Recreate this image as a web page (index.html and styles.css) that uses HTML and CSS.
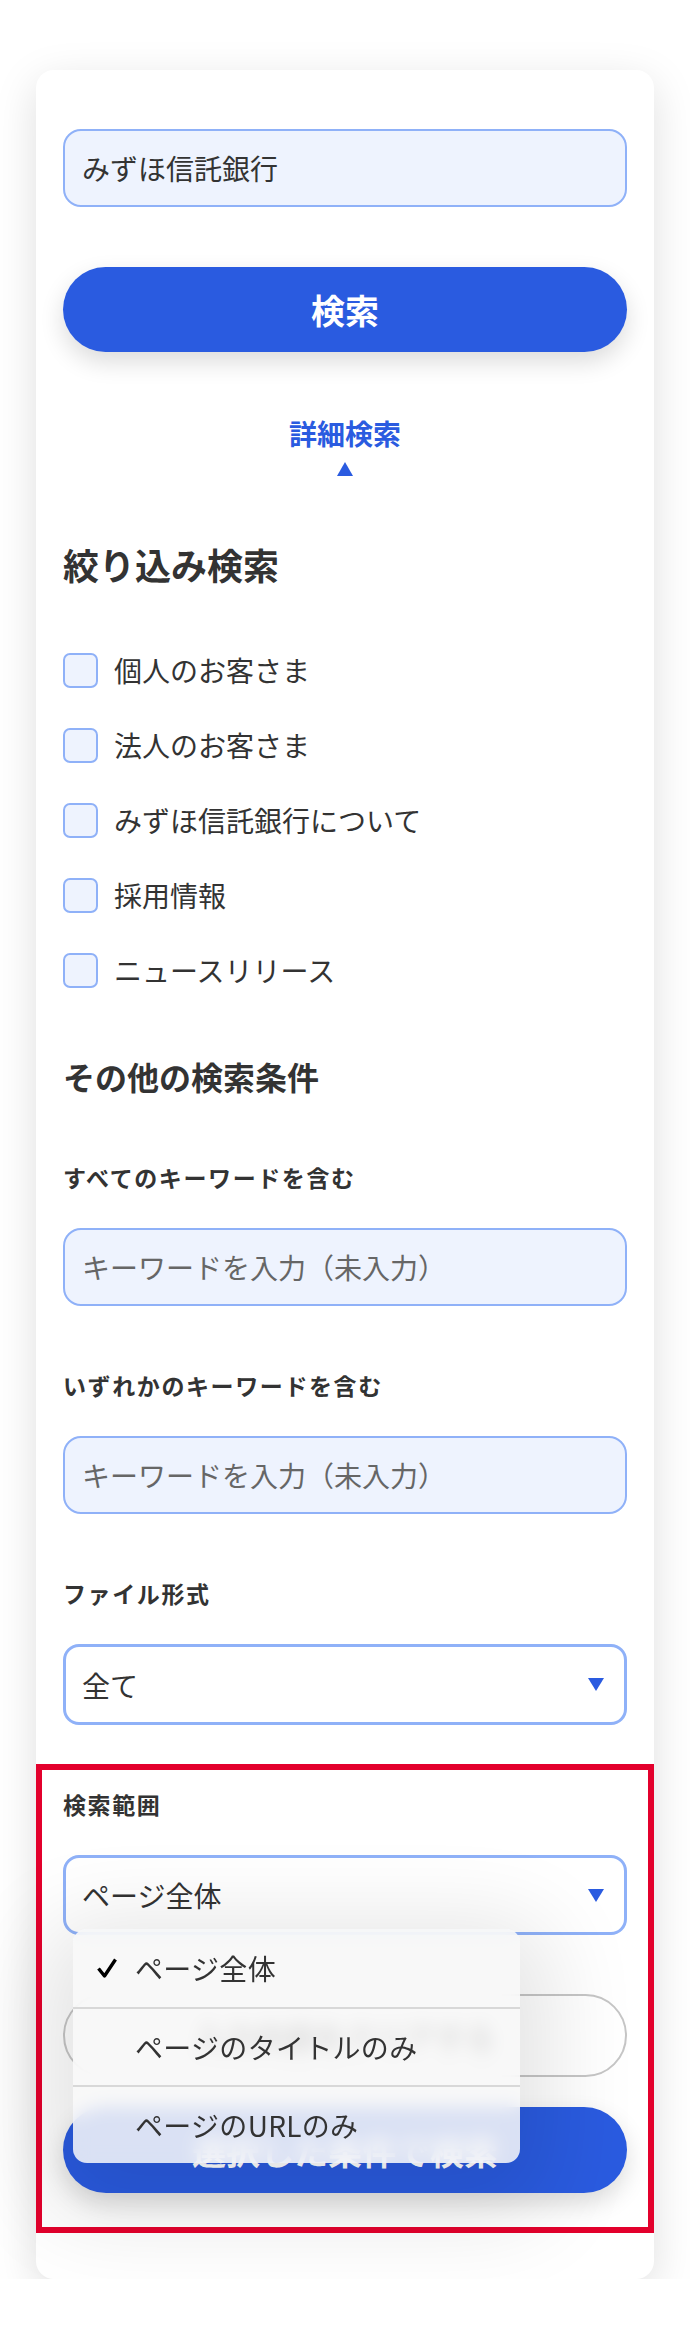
FILE: index.html
```html
<!DOCTYPE html>
<html lang="ja">
<head>
<meta charset="utf-8">
<title>サイト内検索</title>
<link rel="stylesheet" href="styles.css">
</head>
<body>
<div class="card">
  <input class="field" type="text" value="みずほ信託銀行">
  <button class="btn btn-primary btn-search" type="button">検索</button>

  <div class="advanced">
    <span class="advanced-label">詳細検索</span>
    <span class="caret-up"></span>
  </div>

  <h2 class="heading-lg">絞り込み検索</h2>
  <ul class="checks">
    <li class="check"><span class="box"></span><span class="check-label">個人のお客さま</span></li>
    <li class="check"><span class="box"></span><span class="check-label">法人のお客さま</span></li>
    <li class="check"><span class="box"></span><span class="check-label">みずほ信託銀行について</span></li>
    <li class="check"><span class="box"></span><span class="check-label">採用情報</span></li>
    <li class="check"><span class="box"></span><span class="check-label">ニュースリリース</span></li>
  </ul>

  <h3 class="heading-md">その他の検索条件</h3>

  <div class="group">
    <div class="label">すべてのキーワードを含む</div>
    <input class="field" type="text" placeholder="キーワードを入力（未入力）">
  </div>

  <div class="group">
    <div class="label">いずれかのキーワードを含む</div>
    <input class="field" type="text" placeholder="キーワードを入力（未入力）">
  </div>

  <div class="group">
    <div class="label">ファイル形式</div>
    <div class="select"><span>全て</span><span class="caret-down"></span></div>
  </div>

  <div class="group">
    <div class="label">検索範囲</div>
    <div class="select select-scope"><span>ページ全体</span><span class="caret-down"></span></div>
  </div>

  <button class="btn btn-outline" type="button">入力内容をクリアする</button>
  <button class="btn btn-primary btn-submit" type="button">選択した条件で検索</button>

  <div class="highlight"></div>

  <ul class="menu">
    <li class="menu-item is-selected">
      <svg class="tick" width="22" height="22" viewBox="0 0 22 22"><path d="M2.5 11.5 L8.5 19 L19.5 2.5" fill="none" stroke="#000" stroke-width="3.4" stroke-linejoin="round"/></svg>
      <span>ページ全体</span>
    </li>
    <li class="menu-item"><span>ページのタイトルのみ</span></li>
    <li class="menu-item"><span>ページのURLのみ</span></li>
  </ul>
</div>
</body>
</html>
```

FILE: styles.css
```css
* { box-sizing: border-box; }

html, body {
  margin: 0;
  padding: 0;
  background: #ffffff;
}

body {
  font-family: "Noto Sans CJK JP", "Noto Sans", sans-serif;
  color: #333333;
}

.card {
  position: relative;
  width: 618px;
  margin: 70px 0 0 36px;
  padding: 59px 27px 86px;
  background: #ffffff;
  border-radius: 18px;
  box-shadow: 0 12px 44px rgba(0, 0, 0, 0.13);
}

.field {
  display: block;
  width: 100%;
  height: 78px;
  margin: 0;
  padding: 0 17px;
  background: #eef3fe;
  border: 2px solid #8fb1f8;
  border-radius: 18px;
  font-family: inherit;
  font-size: 28px;
  color: #333333;
  outline: none;
}

.field::placeholder {
  color: #666666;
}

.btn {
  display: block;
  width: 100%;
  margin: 0;
  border-radius: 44px;
  font-family: inherit;
  font-weight: 700;
  cursor: pointer;
}

.btn-primary {
  height: 85px;
  background: #2a5be0;
  border: none;
  color: #ffffff;
  font-size: 34px;
  box-shadow: 0 10px 24px rgba(0, 0, 0, 0.14);
}

.btn-search { margin-top: 60px; }

.advanced {
  display: flex;
  flex-direction: column;
  align-items: center;
  margin-top: 61px;
}

.advanced-label {
  font-size: 28px;
  line-height: 40px;
  font-weight: 700;
  color: #2a5be0;
}

.caret-up {
  width: 0;
  height: 0;
  margin-top: 9px;
  border-left: 8.5px solid transparent;
  border-right: 8.5px solid transparent;
  border-bottom: 14px solid #2a5be0;
}

.heading-lg {
  margin: 64px 0 0;
  font-size: 36px;
  line-height: 48px;
  font-weight: 700;
  color: #333333;
}

.checks {
  list-style: none;
  margin: 65px 0 0;
  padding: 0;
  display: flex;
  flex-direction: column;
  gap: 41px;
}

.check {
  display: flex;
  align-items: center;
  gap: 16px;
  height: 34px;
}

.box {
  flex: none;
  width: 35px;
  height: 35px;
  background: #eef3fe;
  border: 2px solid #8fb1f8;
  border-radius: 7px;
}

.check-label {
  font-size: 28px;
  line-height: 34px;
  color: #333333;
}

.heading-md {
  margin: 67px 0 0;
  font-size: 32px;
  line-height: 44px;
  font-weight: 700;
  color: #333333;
}

.group { margin-top: 62px; }

.label {
  font-size: 23px;
  line-height: 34px;
  font-weight: 700;
  letter-spacing: 1.6px;
  color: #333333;
  margin-bottom: 34px;
}

.select {
  display: flex;
  align-items: center;
  justify-content: space-between;
  height: 81px;
  padding: 0 20px 0 16px;
  background: #ffffff;
  border: 3px solid #8fb1f8;
  border-radius: 16px;
  font-size: 28px;
  color: #333333;
}

.select-scope { height: 80px; }

.caret-down {
  width: 0;
  height: 0;
  border-left: 8.5px solid transparent;
  border-right: 8.5px solid transparent;
  border-top: 13px solid #2a5be0;
}

.btn-outline {
  height: 83px;
  margin-top: 59px;
  background: #ffffff;
  border: 2px solid #c6c6c6;
  color: #333333;
  font-size: 30px;
}

.btn-submit {
  height: 86px;
  margin-top: 30px;
}

.highlight {
  position: absolute;
  left: 0;
  right: 0;
  top: 1694px;
  height: 469px;
  border: 6px solid #e3002c;
  pointer-events: none;
}

.menu {
  position: absolute;
  left: 37px;
  top: 1859px;
  width: 447px;
  margin: 0;
  padding: 0;
  list-style: none;
  background: rgba(247, 247, 247, 0.86);
  -webkit-backdrop-filter: blur(9px);
  backdrop-filter: blur(9px);
  border-radius: 14px;
  overflow: hidden;
  box-shadow: 0 24px 90px 30px rgba(0, 0, 0, 0.11);
}

.menu-item {
  display: flex;
  align-items: center;
  height: 78px;
  padding-left: 62px;
  font-size: 28px;
  letter-spacing: 0.3px;
  color: #333333;
}

.menu-item + .menu-item {
  border-top: 2px solid #d8d8d8;
}

.menu-item.is-selected {
  padding-left: 23px;
  gap: 17px;
}

.tick { flex: none; }
```
